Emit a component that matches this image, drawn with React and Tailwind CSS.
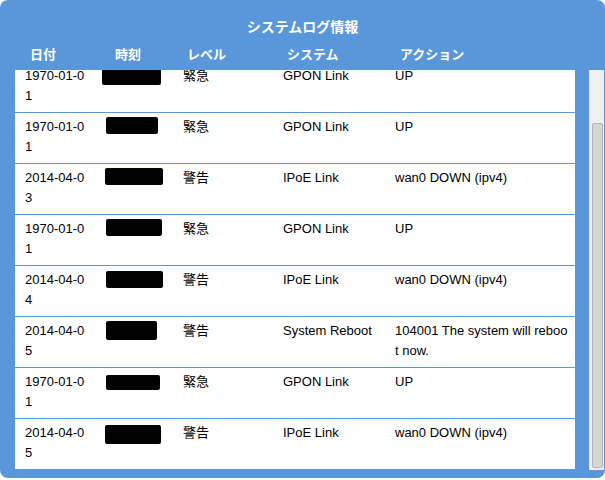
import React from "react";

// log rows (time column is redacted in the source)
const rows = [
  { date: "1970-01-01", level: "緊急", system: "GPON Link", action: "UP", box: [7, 59, 5, 18] },
  { date: "1970-01-01", level: "緊急", system: "GPON Link", action: "UP", box: [11, 52, 4, 17] },
  { date: "2014-04-03", level: "警告", system: "IPoE Link", action: "wan0 DOWN (ipv4)", box: [10, 58, 4, 17] },
  { date: "1970-01-01", level: "緊急", system: "GPON Link", action: "UP", box: [11, 56, 4, 17] },
  { date: "2014-04-04", level: "警告", system: "IPoE Link", action: "wan0 DOWN (ipv4)", box: [11, 57, 5, 17] },
  { date: "2014-04-05", level: "警告", system: "System Reboot", action: "104001 The system will reboot now.", box: [11, 51, 4, 19] },
  { date: "1970-01-01", level: "緊急", system: "GPON Link", action: "UP", box: [11, 54, 7, 15] },
  { date: "2014-04-05", level: "警告", system: "IPoE Link", action: "wan0 DOWN (ipv4)", box: [10, 56, 6, 19] },
  { date: "1970-01-01", level: "緊急", system: "GPON Link", action: "UP", box: [10, 55, 5, 17] },
];

const LogRow = ({ row }) => {
  const [ml, w, mt, h] = row.box;
  return (
    <div className="grid grid-cols-[80px_80px_100px_112px_1fr] h-[51px] border-b border-[#5b97db] text-[13px] leading-[20px] text-black shrink-0">
      <div className="pl-[10px] pt-[4px]">
        <div className="w-[62px] break-all">{row.date}</div>
      </div>
      <div>
        <div className="bg-black rounded-[2px]" style={{ marginLeft: ml, width: w, marginTop: mt, height: h }}></div>
      </div>
      <div className="pl-[8px] pt-[4px]">{row.level}</div>
      <div className="pl-[8px] pt-[4px]">{row.system}</div>
      <div className="pl-[8px] pt-[4px]">
        <div className="w-[174px] break-all">{row.action}</div>
      </div>
    </div>
  );
};

const App = () => {
  return (
    <div className="w-[605px] h-[480px] bg-white" style={{ fontFamily: '"Liberation Sans", "Noto Sans CJK JP", sans-serif' }}>
      <div className="w-[605px] h-[478px] bg-[#5a96da] rounded-[8px] flex flex-col">
        {/* title */}
        <div className="pt-[17px] h-[37px] text-center text-white font-bold text-[14px] leading-[20px]">システムログ情報</div>
        {/* header */}
        <div className="mt-[8px] h-[20px] pl-[30px] grid grid-cols-[85px_72px_100px_113px_1fr] text-white font-bold text-[13px] leading-[20px]">
          <div>日付</div>
          <div>時刻</div>
          <div>レベル</div>
          <div>システム</div>
          <div>アクション</div>
        </div>
        {/* body */}
        <div className="mt-[5px] flex pl-[15px]">
          <div className="w-[560px] h-[399px] bg-white overflow-hidden">
            <div className="flex flex-col -mt-[8px]">
              {rows.map((row, i) => (
                <LogRow row={row} key={i} />
              ))}
            </div>
          </div>
          {/* scrollbar */}
          <div className="ml-[14px] w-[15px] h-[400px] bg-[#f0f0f0] border-l border-[#e6e6e6] flex flex-col">
            <div className="mt-[53px] ml-[2px] w-[11px] h-[345px] bg-[#d6d6d6] border border-[#b4b4b4] rounded-[2px]"></div>
          </div>
        </div>
      </div>
    </div>
  );
};

export default App;
